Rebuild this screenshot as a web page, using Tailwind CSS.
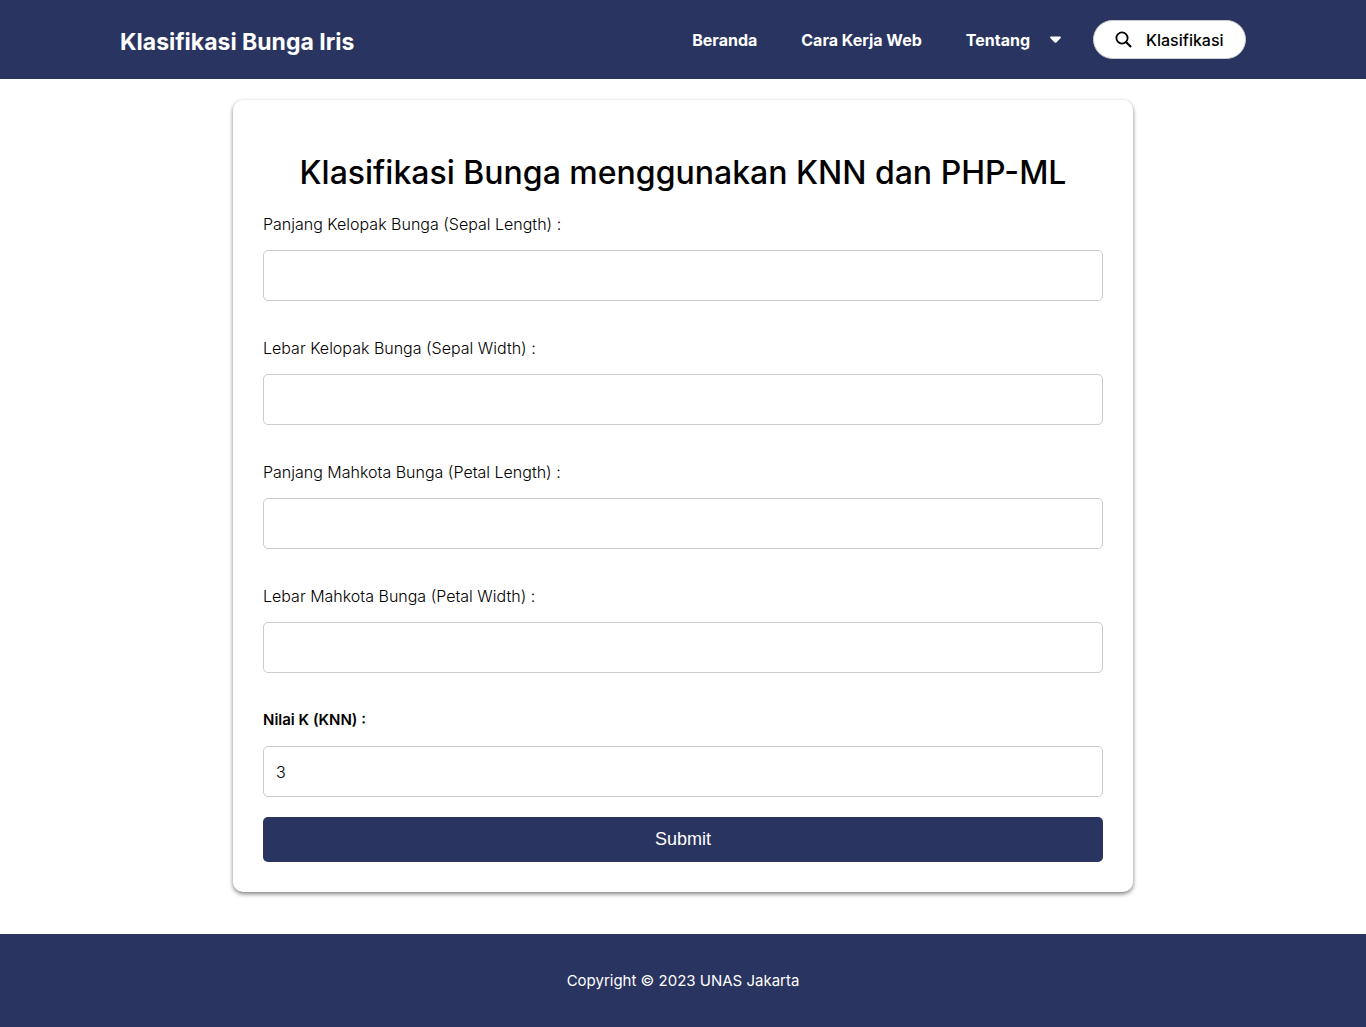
<!DOCTYPE html>
<html lang="id">
<head>
<meta charset="utf-8">
<meta name="viewport" content="width=device-width, initial-scale=1">
<title>Klasifikasi Bunga Iris</title>
<script src="https://cdn.jsdelivr.net/npm/@tailwindcss/browser@4"></script>
</head>
<body class="flex min-h-screen flex-col bg-white font-['Inter',sans-serif] text-base leading-5 text-black">
<header class="flex flex-wrap items-center justify-between bg-[#2a3460] px-[120px] py-5 text-white">
  <a href="#" class="pt-1 text-[23px] leading-8 font-bold">Klasifikasi Bunga Iris</a>
  <nav class="flex items-center">
    <a href="#" class="mr-11 font-bold">Beranda</a>
    <a href="#" class="mr-11 font-bold">Cara Kerja Web</a>
    <a href="#" class="mr-8 flex items-center gap-5 font-bold">Tentang
      <svg class="h-[7px] w-[11px]" viewBox="0 0 11 7" fill="currentColor" aria-hidden="true"><path d="M1 .5h9c.8 0 1.2.9.7 1.5L6.300 6.400a1.100 1.100 0 0 1-1.600 0L.3 2C-.2 1.400.2.5 1 .5z"/></svg>
    </a>
    <button type="button" class="flex h-[39px] w-[153px] items-center gap-3.5 rounded-full border border-[#ccc] bg-white pl-[21px] font-medium text-black">
      <svg class="h-[17px] w-[17px]" viewBox="0 0 17 17" fill="none" stroke="currentColor" stroke-width="1.800" aria-hidden="true"><circle cx="7" cy="7" r="5.600"/><path d="M11 11l5 5" stroke-width="2.100"/></svg>
      Klasifikasi
    </button>
  </nav>
</header>
<main class="flex-1 px-5 pt-[21px] pb-[42px]">
  <form class="mx-auto flex max-w-[900px] flex-col rounded-[10px] bg-white px-[30px] pt-[53px] pb-[30px] shadow-[0_2px_4px_rgba(0,0,0,0.5)]">
    <h1 class="text-center text-[32px] leading-10 font-medium">Klasifikasi Bunga menggunakan KNN dan PHP-ML</h1>
    <label for="sl" class="mt-[21px] mb-4 font-light">Panjang Kelopak Bunga (Sepal Length) :</label>
    <input id="sl" type="text" class="h-[51px] rounded-[5px] border border-[#ccc] px-3 font-light">
    <label for="sw" class="mt-[37px] mb-4 font-light">Lebar Kelopak Bunga (Sepal Width) :</label>
    <input id="sw" type="text" class="h-[51px] rounded-[5px] border border-[#ccc] px-3 font-light">
    <label for="pl" class="mt-[37px] mb-4 font-light">Panjang Mahkota Bunga (Petal Length) :</label>
    <input id="pl" type="text" class="h-[51px] rounded-[5px] border border-[#ccc] px-3 font-light">
    <label for="pw" class="mt-[37px] mb-4 font-light">Lebar Mahkota Bunga (Petal Width) :</label>
    <input id="pw" type="text" class="h-[51px] rounded-[5px] border border-[#ccc] px-3 font-light">
    <label for="k" class="mt-[37px] mb-4 text-[15px] leading-5 font-semibold">Nilai K (KNN) :</label>
    <input id="k" type="text" value="3" class="h-[51px] rounded-[5px] border border-[#ccc] px-3 font-light">
    <button type="submit" class="mt-5 h-[45px] rounded-[5px] bg-[#2a3460] pb-0.5 font-['Liberation_Sans',sans-serif] text-lg text-white">Submit</button>
  </form>
</main>
<footer class="bg-[#2a3460] px-5 pt-[37px] pb-9 text-center text-[15px] leading-5 text-white">Copyright © 2023 UNAS Jakarta</footer>
</body>
</html>
